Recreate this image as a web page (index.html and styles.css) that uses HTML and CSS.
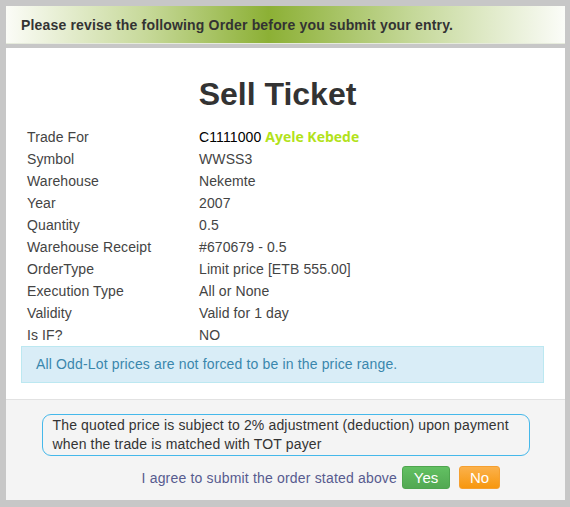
FILE: index.html
```html
<!DOCTYPE html>
<html>
<head>
<meta charset="utf-8">
<link rel="stylesheet" href="styles.css">
</head>
<body>
<div class="modal">
  <div class="modal-header">Please revise the following Order before you submit your entry.</div>
  <div class="modal-body">
    <h1 class="title">Sell Ticket</h1>
    <div class="details">
      <div class="row"><span class="label">Trade For</span><span class="value"><span class="code">C1111000</span> <span class="name">Ayele Kebede</span></span></div>
      <div class="row"><span class="label">Symbol</span><span class="value">WWSS3</span></div>
      <div class="row"><span class="label">Warehouse</span><span class="value">Nekemte</span></div>
      <div class="row"><span class="label">Year</span><span class="value">2007</span></div>
      <div class="row"><span class="label">Quantity</span><span class="value">0.5</span></div>
      <div class="row"><span class="label">Warehouse Receipt</span><span class="value">#670679 - 0.5</span></div>
      <div class="row"><span class="label">OrderType</span><span class="value">Limit price [ETB 555.00]</span></div>
      <div class="row"><span class="label">Execution Type</span><span class="value">All or None</span></div>
      <div class="row"><span class="label">Validity</span><span class="value">Valid for 1 day</span></div>
      <div class="row"><span class="label">Is IF?</span><span class="value">NO</span></div>
    </div>
    <div class="alert-info">All Odd-Lot prices are not forced to be in the price range.</div>
  </div>
  <div class="modal-footer">
    <div class="notice">The quoted price is subject to 2% adjustment (deduction) upon payment when the trade is matched with TOT payer</div>
    <div class="agree">
      <span class="agree-text">I agree to submit the order stated above</span>
      <button class="btn btn-yes">Yes</button>
      <button class="btn btn-no">No</button>
    </div>
  </div>
</div>
</body>
</html>
```

FILE: styles.css
```css
html, body {
  margin: 0;
  padding: 0;
}
body {
  background: #c7c7c7;
  font-family: "Liberation Sans", Arial, sans-serif;
  font-size: 14px;
  color: #333;
  width: 570px;
  height: 507px;
  overflow: hidden;
}
.modal {
  box-sizing: border-box;
  width: 570px;
  height: 507px;
  padding: 6px 5px 7px 6px;
  display: flex;
  flex-direction: column;
  gap: 4px;
}
.modal-header {
  height: 37px;
  border-bottom: 1px solid #e6ebdc;
  background: linear-gradient(to right, #fbfcf7 0%, #c7d99a 25%, #8cb035 47%, #c3d796 72%, #fbfcf8 100%);
  display: flex;
  align-items: center;
  padding-left: 15px;
  font-weight: bold;
  font-size: 14px;
  letter-spacing: 0.17px;
  color: #333;
}
.modal-body {
  background: #fff;
  padding: 0 21px 16px 15px;
  border-bottom: 1px solid #e2e2e2;
}
.title {
  margin: 28px 0 13px;
  padding-right: 10px;
  font-size: 32px;
  line-height: 37px;
  font-weight: bold;
  text-align: center;
  color: #333;
}
.details {
  padding-left: 6px;
}
.row {
  display: flex;
  height: 22px;
  line-height: 22px;
  color: #444;
  letter-spacing: 0.1px;
}
.label {
  width: 172px;
  flex: none;
}
.code {
  color: #000;
}
.name {
  font-family: "Open Sans", sans-serif;
  font-weight: bold;
  font-size: 14px;
  letter-spacing: 0;
  color: #b2e21a;
}
.alert-info {
  background: #d9edf7;
  border: 1px solid #bce8f1;
  color: #3a87ad;
  padding: 8px 14px;
  line-height: 19px;
  letter-spacing: 0.15px;
}
.modal-footer {
  flex: 1;
  margin-top: -4px;
  background: #f4f4f4;
  padding: 14px 0 0;
  display: flex;
  flex-direction: column;
  align-items: center;
}
.notice {
  box-sizing: border-box;
  width: 488px;
  border: 1px solid #45b8ea;
  border-radius: 9px;
  padding: 1px 10px;
  font-size: 14px;
  letter-spacing: 0.15px;
  line-height: 19px;
  color: #333;
}
.agree {
  align-self: stretch;
  display: flex;
  justify-content: flex-end;
  align-items: center;
  padding-right: 65px;
  margin-top: 10px;
}
.agree-text {
  color: #575b8f;
  margin-right: 5px;
  letter-spacing: 0.18px;
}
.btn {
  font-family: "Liberation Sans", Arial, sans-serif;
  font-size: 15px;
  color: #fff;
  height: 23px;
  border-radius: 3px;
  padding: 0;
  cursor: pointer;
}
.btn-yes {
  width: 48px;
  background: linear-gradient(#62c062, #52a852);
  border: 1px solid #4ea54e;
}
.btn-no {
  width: 41px;
  margin-left: 9px;
  background: linear-gradient(#fbb14b, #f7970e);
  border: 1px solid #f5a030;
}
```
